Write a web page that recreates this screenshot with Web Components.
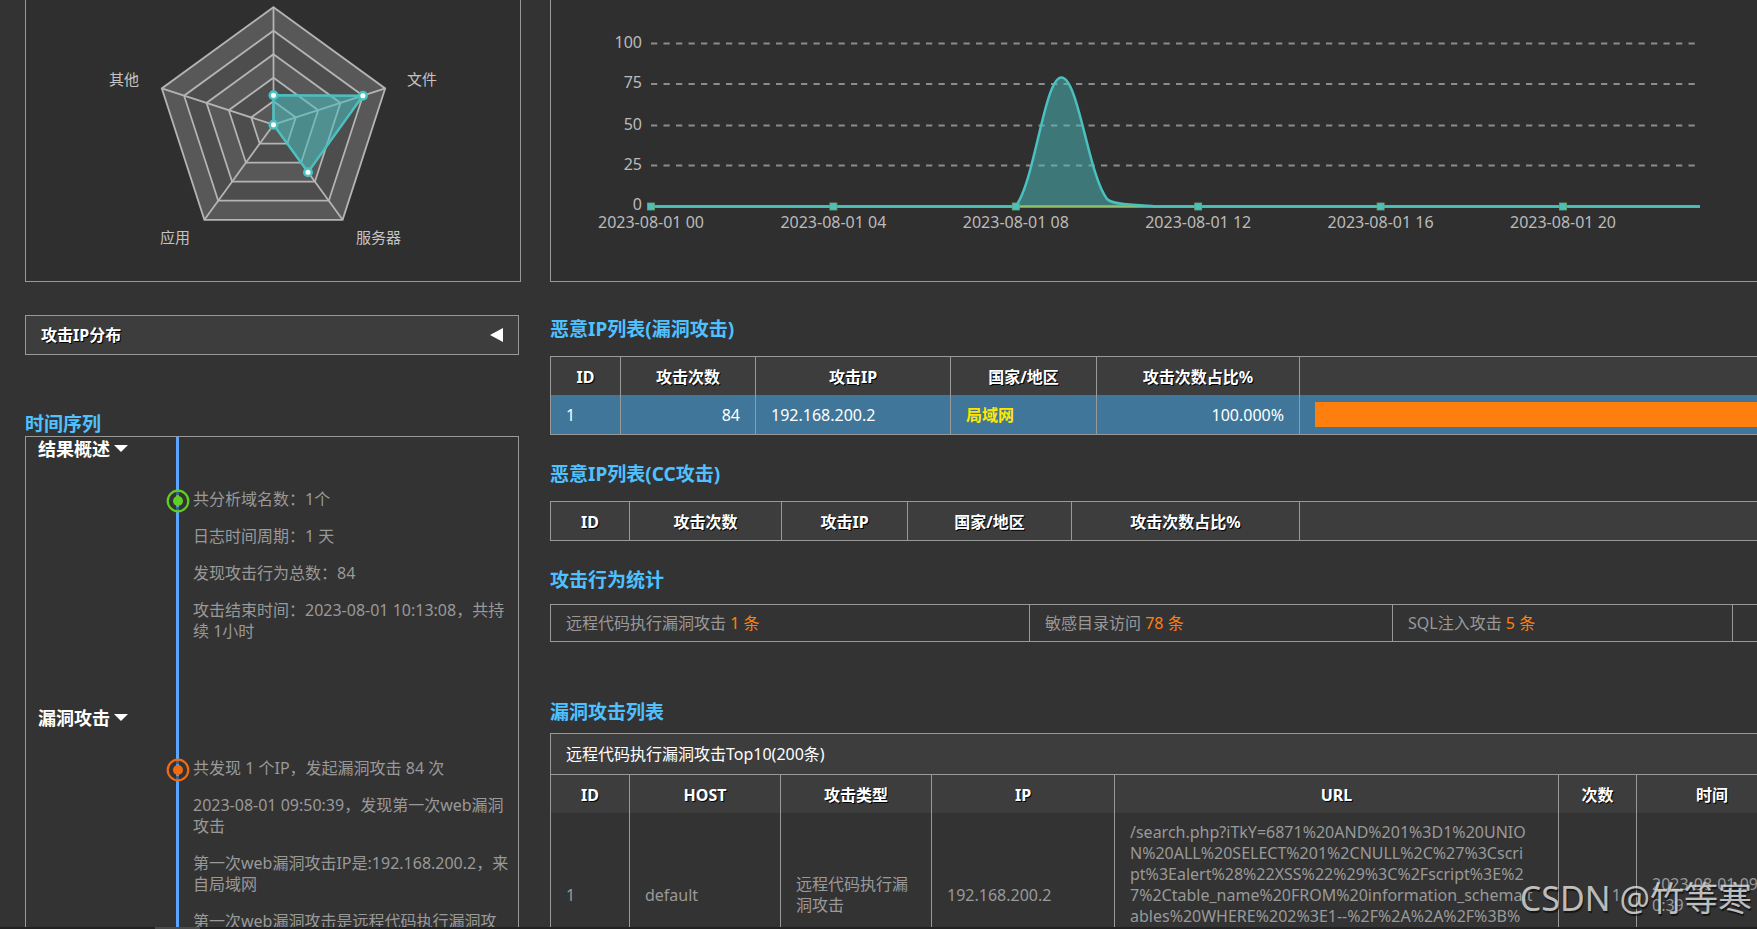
<!DOCTYPE html>
<html lang="zh-CN">
<head>
<meta charset="utf-8">
<title>日志分析报告</title>
<style>
  body {
    margin: 0;
    height: 100vh;
    overflow: hidden;
    background: #333;
    color: #999;
    font: 16px/21px "Noto Sans", "Noto Sans CJK SC", sans-serif;
    --line: #999;
    --head: #3d3d3d;
    --panel: #2f2f2f;
    --title: #4fc1ff;
    --accent: #ff7f0e;
  }
</style>
</head>
<body>
<report-page>
  <chart-panel slot="side"><radar-chart></radar-chart></chart-panel>
  <fold-bar slot="side">攻击IP分布</fold-bar>
  <section-title slot="side">时间序列</section-title>
  <time-line slot="side">
    <time-entry heading="结果概述" tone="#5fd01f">
      <p>共分析域名数：1个</p>
      <p>日志时间周期：1 天</p>
      <p>发现攻击行为总数：84</p>
      <p>攻击结束时间：2023-08-01 10:13:08，共持续 1小时</p>
    </time-entry>
    <time-entry heading="漏洞攻击" tone="#f06a12">
      <p>共发现 1 个IP，发起漏洞攻击 84 次</p>
      <p>2023-08-01 09:50:39，发现第一次web漏洞攻击</p>
      <p>第一次web漏洞攻击IP是:192.168.200.2，来自局域网</p>
      <p>第一次web漏洞攻击是远程代码执行漏洞攻击</p>
    </time-entry>
  </time-line>

  <chart-panel><trend-chart></trend-chart></chart-panel>
  <section-title>恶意IP列表(漏洞攻击)</section-title>
  <ip-table kind="exploit"></ip-table>
  <section-title>恶意IP列表(CC攻击)</section-title>
  <ip-table kind="cc"></ip-table>
  <section-title>攻击行为统计</section-title>
  <stat-table></stat-table>
  <section-title>漏洞攻击列表</section-title>
  <attack-table></attack-table>
</report-page>

<script>
  const define = (name, render) => customElements.define(name, class extends HTMLElement {
    connectedCallback() {
      if (this.shadowRoot) return;
      this.attachShadow({ mode: "open" }).innerHTML = render(this);
    }
  });

  const tableCss = `
    :host { display: block; }
    table { width: 100%; table-layout: fixed; border-collapse: separate; border-spacing: 0;
      border: solid var(--line); border-width: 1px 0; }
    th, td { box-sizing: border-box; border-left: 1px solid var(--line); padding: 0 15px; text-align: left; }
    th { height: 38px; padding-top: 3px; background: var(--head); color: #fff; text-align: center; text-shadow: 1px 1px #000; }
    .num { text-align: right; }`;
  const cols = widths => `<colgroup>${widths.map(w => `<col style="width:${w}px">`).join("")}<col></colgroup>`;
  const heads = names => `<tr>${names.map(n => `<th scope="col">${n}</th>`).join("")}<td class="rest"></td></tr>`;

  define("report-page", () => `
    <style>
      :host { display: flex; flex-direction: column; height: 100%; }
      .view { flex: 1; min-height: 0; overflow: hidden; }
      .sheet { width: calc(100% + 30px); box-sizing: border-box; padding-left: 25px;
        display: grid; grid-template-columns: 496px minmax(0, 1fr); column-gap: 29px; align-items: start; }
      ::slotted(fold-bar) { margin: 33px 2px 57px 0; }
      ::slotted(time-line) { margin-right: 2px; }
      ::slotted(chart-panel:not([slot])) { margin-bottom: 35px; }
      ::slotted(ip-table) { margin: 15px 0 27px; }
      ::slotted(stat-table) { margin: 12px 0 58px; }
      ::slotted(attack-table) { margin-top: 9px; }
      .track { height: 2px; background: #222; padding-left: 155px; }
      .thumb { width: 45px; height: 2px; background: #4a4a4a; }
      .mark { position: absolute; right: 5px; bottom: 8px; font-size: 34px; line-height: 46px;
        color: rgba(225,225,225,.82); text-shadow: 1px 2px 1px rgba(0,0,0,.6); white-space: nowrap; }
    </style>
    <div class="view"><div class="sheet">
      <aside><slot name="side"></slot></aside>
      <main><slot></slot></main>
    </div></div>
    <div class="track"><div class="thumb"></div></div>
    <div class="mark">CSDN @竹等寒</div>`);

  define("chart-panel", () => `
    <style>
      :host { display: block; border: solid var(--line); border-width: 0 1px 1px; background: var(--panel); }
    </style><slot></slot>`);

  define("section-title", () => `
    <style>
      :host { display: block; }
      h2 { margin: 0; font-size: 19px; line-height: 24px; color: var(--title); }
    </style><h2><slot></slot></h2>`);

  define("fold-bar", () => `
    <style>
      :host { display: block; }
      button { width: 100%; height: 40px; box-sizing: border-box; padding: 0 14px 0 15px; display: flex;
        align-items: center; justify-content: space-between; border: 1px solid var(--line);
        background: var(--head); color: #fff; font: inherit; font-weight: 700; text-shadow: 1px 1px #000; }
    </style>
    <button type="button"><slot></slot>
      <svg width="14" height="14" aria-hidden="true"><path d="M0 7 13 0v14z" fill="#fff"/></svg>
    </button>`);

  define("time-line", () => `
    <style>
      :host { display: block; border: 1px solid var(--line); }
    </style><slot></slot>`);

  define("time-entry", el => `
    <style>
      :host { display: grid; grid-template-columns: 150px 3px minmax(0, 1fr); min-height: 269px; }
      button { align-self: start; justify-self: start; display: flex; align-items: center; gap: 4px;
        margin: 0 0 0 12px; padding: 0; border: 0; background: none; color: #fff;
        font: inherit; font-size: 18px; font-weight: 700; line-height: 24px; }
      .rail { background: #5aa5ff; position: relative; }
      .dot { position: absolute; left: -10px; top: 52px; }
      .body { padding: 52px 8px 0 14px; }
      ::slotted(p) { margin: 0 0 16px; }
    </style>
    <button type="button">${el.getAttribute("heading")}
      <svg width="14" height="8" aria-hidden="true"><path d="M0 0h14L7 7z" fill="#fff"/></svg></button>
    <div class="rail"><svg class="dot" width="24" height="24" viewBox="0 0 24 24" fill="${el.getAttribute("tone")}" aria-hidden="true">
      <circle cx="12" cy="12" r="8" fill="none" stroke="#333" stroke-opacity=".6" stroke-width="4"/>
      <circle cx="12" cy="12" r="10.3" fill="none" stroke="${el.getAttribute("tone")}" stroke-width="2.2"/>
      <circle cx="12" cy="12" r="5"/></svg></div>
    <div class="body"><slot></slot></div>`);

  define("radar-chart", () => {
    const cx = 247.5, cy = 124.7, R = 117.5;
    const at = (i, k) => {
      const a = (i * 72 - 90) * Math.PI / 180;
      return [cx + R * k * Math.cos(a), cy + R * k * Math.sin(a)].map(v => v.toFixed(1));
    };
    const ring = k => [0, 1, 2, 3, 4].map(i => at(i, k).join()).join(" ");
    const rings = [1, .8, .6, .4, .2].map((k, n) =>
      `<polygon points="${ring(k)}" fill="${n % 2 ? "#4d4d4d" : "#585858"}"/>`).join("");
    const axes = [0, 1, 2, 3, 4].map(i => `<path d="M${cx} ${cy}L${at(i, 1).join(" ")}"/>`).join("");
    const data = [.25, .8, .5, 0, 0].map((k, i) => at(i, k));
    return `
    <style>
      :host { display: block; }
      svg { display: block; margin: 0 auto; }
      text { font-size: 15px; fill: #c4c4c4; }
    </style>
    <svg width="494" height="281" viewBox="0 0 494 281" role="img" aria-label="攻击类型分布">
      <g stroke="#b4b4b4" stroke-width="1.8">${rings}${axes}</g>
      <polygon points="${data.join(" ")}" fill="#4bc0c0" fill-opacity=".55" stroke="#4bc0c0" stroke-width="2.5"/>
      <g fill="#fff" stroke="#4bc0c0" stroke-width="2.5">${data.slice(0, 4).map(([x, y]) => `<circle cx="${x}" cy="${y}" r="3.8"/>`).join("")}</g>
      <text x="83" y="85">其他</text><text x="381" y="85">文件</text>
      <text x="134" y="243">应用</text><text x="330" y="243">服务器</text>
    </svg>`;
  });

  define("trend-chart", () => {
    const x0 = 100, step = 45.6, base = 206;
    const ticks = [[100, 43.5], [75, 84], [50, 125.5], [25, 165.5]];
    const px = h => x0 + h * step;
    const hump = `M${px(8)} ${base}C${px(8) + 19} 182 ${px(9) - 17} 77.5 ${px(9)} 77.5S${px(10) - 19} 174 ${px(10)} 199C${px(10) + 7} 206 ${px(11) - 8} 205 ${px(11)} ${base}`;
    return `
    <style>
      :host { display: block; }
      svg { display: block; width: 100%; height: 281px; }
      text { font-size: 16px; fill: #bbb; }
      .y { text-anchor: end; } .x { text-anchor: middle; }
    </style>
    <svg viewBox="0 0 1234 281" preserveAspectRatio="xMinYMin meet" role="img" aria-label="攻击时间趋势">
      <g stroke="#8c8c8c" stroke-width="1.8" stroke-dasharray="6.25 6.25">
        ${ticks.map(([, y]) => `<path d="M${x0} ${y}H1146"/>`).join("")}</g>
      ${[...ticks, [0, base]].map(([v, y]) => `<text class="y" x="91" y="${y + 4}">${v}</text>`).join("")}
      <path d="${hump}Z" fill="#4bc0c0" fill-opacity=".5"/>
      <path d="M${x0} ${base}.5H1149" stroke="#91c06c" stroke-width="2.5"/>
      <path d="M${x0} ${base}.5H${px(8)}M${px(11)} ${base}.5H1149" stroke="#4bc0b8" stroke-width="2.5"/>
      <path d="${hump}" fill="none" stroke="#4bc0c0" stroke-width="2.5"/>
      ${["00", "04", "08", "12", "16", "20"].map((h, i) => `
        <rect x="${px(i * 4) - 3.5}" y="203" width="7" height="7" fill="#4bc0c0" stroke="#6aa86a" stroke-width=".8"/>
        <text class="x" x="${px(i * 4)}" y="228">2023-08-01 ${h}</text>`).join("")}
    </svg>`;
  });

  const ipHeads = ["ID", "攻击次数", "攻击IP", "国家/地区", "攻击次数占比%"];
  define("ip-table", el => {
    const full = el.getAttribute("kind") === "exploit";
    return `
    <style>${tableCss}
      .rest { background: var(--head); }
      tbody td { height: 39px; padding-top: 2px; background: #3f7699; color: #fff; }
      .place { color: #ffe600; font-weight: 700; }
      .bar { height: 25px; background: var(--accent); }
      tbody td.wide { padding: 0 0 0 15px; }
    </style>
    <table>${cols(full ? [70, 135, 195, 146, 203] : [79, 152, 126, 164, 228])}
      <thead>${heads(ipHeads)}</thead>
      ${full ? `<tbody><tr><td>1</td><td class="num">84</td><td>192.168.200.2</td>
        <td class="place">局域网</td><td class="num">100.000%</td><td class="wide"><div class="bar"></div></td></tr></tbody>` : ""}
    </table>`;
  });

  define("stat-table", () => `
    <style>${tableCss}
      td { height: 36px; }
      b { color: var(--accent); font-weight: 400; }
    </style>
    <table>${cols([479, 363, 340])}
      <tbody><tr><td>远程代码执行漏洞攻击 <b>1 条</b></td><td>敏感目录访问 <b>78 条</b></td>
        <td>SQL注入攻击 <b>5 条</b></td><td></td></tr></tbody>
    </table>`);

  define("attack-table", () => `
    <style>${tableCss}
      .cap { box-sizing: border-box; height: 41px; padding: 10px 15px; background: var(--head); color: #fff;
        border: solid var(--line); border-width: 1px 0 0 1px; }
      tbody td { height: 164px; word-break: break-all; }
      tbody .url { vertical-align: top; padding: 9px 0 0 15px; }
    </style>
    <div class="cap" id="cap">远程代码执行漏洞攻击Top10(200条)</div>
    <table aria-labelledby="cap">${cols([79, 151, 151, 183, 444, 78])}
      <thead><tr>${["ID", "HOST", "攻击类型", "IP", "URL", "次数", "时间"].map(n => `<th scope="col">${n}</th>`).join("")}</tr></thead>
      <tbody><tr><td>1</td><td>default</td><td>远程代码执行漏洞攻击</td><td>192.168.200.2</td>
        <td class="url">/search.php?iTkY=6871%20AND%201%3D1%20UNIO<br>N%20ALL%20SELECT%201%2CNULL%2C%27%3Cscri<br>pt%3Ealert%28%22XSS%22%29%3C%2Fscript%3E%2<br>7%2Ctable_name%20FROM%20information_schema.t<br>ables%20WHERE%202%3E1--%2F%2A%2A%2F%3B%</td>
        <td class="num">1</td><td>2023-08-01 09:50:39</td></tr></tbody>
    </table>`);
</script>
</body>
</html>
